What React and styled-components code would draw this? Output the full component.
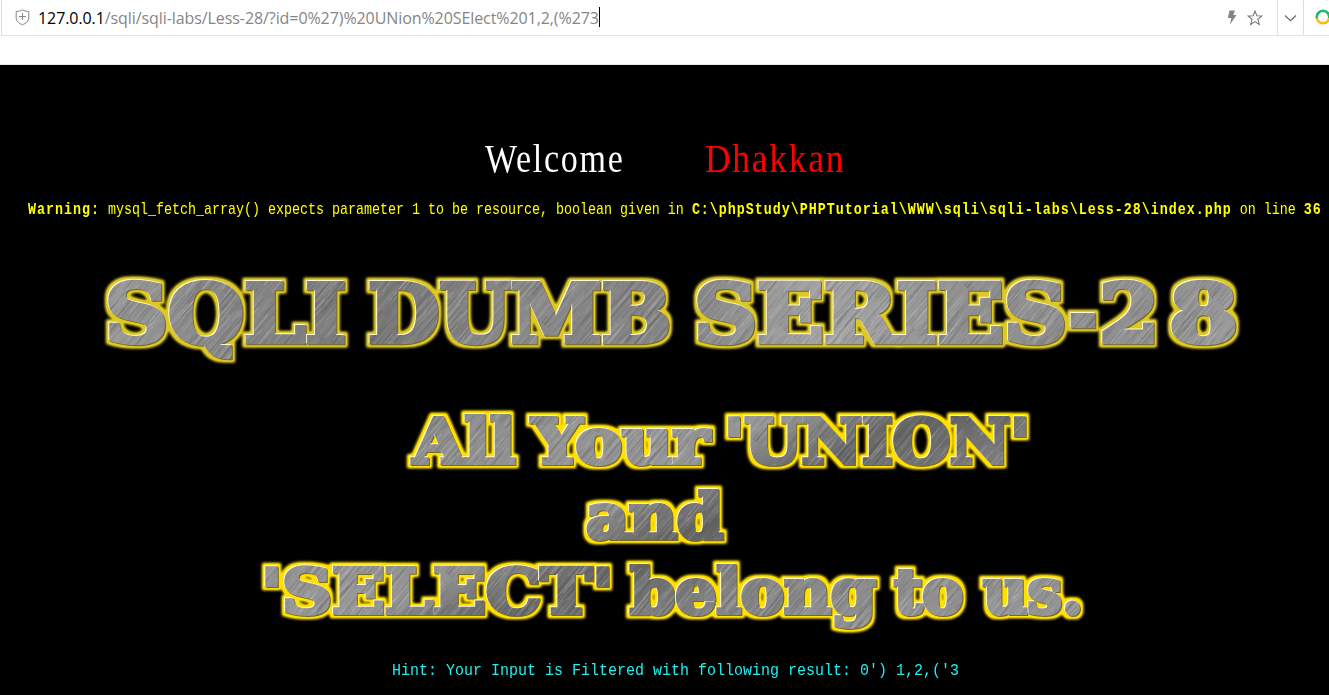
import React from "react";
import styled, { createGlobalStyle } from "styled-components";

const Global = createGlobalStyle`
  * { box-sizing: border-box; }
  html, body { margin: 0; background: #000; }
  body { width: 1329px; height: 695px; overflow: hidden; }
`;

const Page = styled.div`
  width: 1329px;
  height: 695px;
  display: flex;
  flex-direction: column;
  overflow: hidden;
  background: #000;
`;

const AddressBar = styled.header`
  height: 36px;
  flex: none;
  display: flex;
  align-items: stretch;
  margin-left: 1px;
  border-left: 1px solid #dedede;
  border-bottom: 1px solid #e2e2e2;
  background: #fff;
`;

const Chrome = styled.div`
  height: 65px;
  flex: none;
  background: #fff;
  border-bottom: 1px solid #e8e8e8;
`;

const Field = styled.div`
  flex: 1;
  display: flex;
  align-items: center;
  padding-left: 13px;
`;

const Url = styled.div`
  font: 16px/34px "Open Sans", "Noto Sans", sans-serif;
  letter-spacing: ${(p) => p.$spacing};
  color: #858585;
  margin-left: 8px;
  white-space: nowrap;
`;

const Host = styled.span`
  color: #000;
`;

const Caret = styled.span`
  width: 1px;
  height: 20px;
  background: #000;
  margin-top: -1px;
`;

const Actions = styled.div`
  display: flex;
  align-items: center;
  gap: 10px;
  padding-right: 14px;
`;

const BarCell = styled.div`
  width: ${(p) => p.$width}px;
  display: flex;
  align-items: center;
  justify-content: ${(p) => (p.$start ? "flex-start" : "center")};
  padding-left: ${(p) => (p.$start ? 11 : 0)}px;
  padding-bottom: ${(p) => (p.$start ? 2 : 0)}px;
  border-left: 1px solid #dedede;
  overflow: hidden;
`;

const Icon = styled.svg`
  display: block;
  flex: none;
  fill: none;
`;

const Content = styled.main`
  flex: 1;
  display: flex;
  flex-direction: column;
`;

const Welcome = styled.h1`
  margin: 69px 0 0 485px;
  height: 50px;
  display: flex;
  font: 400 40px/50px "Liberation Serif", serif;
`;

const Name = styled.span`
  width: ${(p) => p.$width}px;
  color: ${(p) => p.$color};
  letter-spacing: 2px;
  transform: scaleX(${(p) => p.$squeeze});
  transform-origin: left;
`;

const Warning = styled.p`
  margin: 16px 0 0 28px;
  height: 20px;
  font: 13.333px/20px "Liberation Mono", monospace;
  color: #ff0;
  white-space: pre;
  transform: scaleY(1.18);
`;

const Strong = styled.b`
  letter-spacing: 1px;
`;

const Banner = styled.svg`
  display: block;
  flex: none;
  margin-top: ${(p) => p.$top}px;
`;

const Letters = styled.text`
  font-family: "DejaVu Serif", serif;
  font-weight: 700;
  font-size: ${(p) => p.$size}px;
`;

const Hint = styled.p`
  margin: 15px 0 0 392px;
  height: 24px;
  font: 15px/24px "Liberation Mono", monospace;
  color: #2ee;
  white-space: pre;
  transform: scaleY(1.14);
`;

const titleWords = [
  ["SQLI", 105, 346, 81.5],
  ["DUMB", 368, 671, 81.5],
  ["SERIES", 694, 1067, 81.5],
  ["-", 1069, 1097, 81.5],
  ["2", 1099, 1159, 81.5],
  ["8", 1169, 1238, 81.5],
];

const sloganWords = [
  ["All", 413, 515, 67.5],
  ["Your", 532, 709, 67.5],
  ["'UNION'", 724, 1030, 67.5],
  ["and", 586, 723, 143],
  ["'SELECT'", 261, 613, 218],
  ["belong", 630, 876, 218],
  ["to", 894, 963, 218],
  ["us.", 983, 1083, 218],
];

function makeStreaks(count) {
  let seed = 4711;
  const next = () => {
    seed = (seed * 16807) % 2147483647;
    return seed / 2147483647;
  };
  return Array.from({ length: count }, () => ({
    x: next() * 150,
    y: next() * 150,
    len: 14 + next() * 40,
    light: next() > 0.5,
    opacity: 0.06 + next() * 0.24,
  }));
}

const streaks = makeStreaks(800);

function MetalSign({ id, top, height, size, words, glow, tones, axis, thick }) {
  return (
    <Banner $top={top} width="1329" height={height} viewBox={`0 0 1329 ${height}`}>
      <defs>
        <linearGradient id={`${id}-tone`} gradientUnits="userSpaceOnUse" x1={axis[0]} y1={axis[1]} x2={axis[2]} y2={axis[3]}>
          {tones.map((c, i) => (
            <stop key={i} offset={i / (tones.length - 1)} stopColor={c} />
          ))}
        </linearGradient>
        <pattern id={`${id}-streaks`} patternUnits="userSpaceOnUse" width="150" height="150" patternTransform="rotate(40)">
          {streaks.map((s, i) => (
            <rect
              key={i}
              x={s.x}
              y={s.y}
              width="0.7"
              height={s.len}
              fill={s.light ? "#dcdcdc" : "#3c3c3c"}
              opacity={s.opacity}
            />
          ))}
        </pattern>
        <pattern id={`${id}-metal`} patternUnits="userSpaceOnUse" width="1329" height={height}>
          <rect width="1329" height={height} fill={`url(#${id}-tone)`} />
          <rect width="1329" height={height} fill={`url(#${id}-streaks)`} />
        </pattern>
        <filter id={`${id}-fx`} filterUnits="userSpaceOnUse" x="0" y="-10" width="1329" height={height + 20} colorInterpolationFilters="sRGB">
          <feMorphology in="SourceAlpha" operator="dilate" radius="3" result="wide" />
          <feGaussianBlur in="wide" stdDeviation="1.8" result="soft" />
          <feComponentTransfer in="soft" result="dense">
            <feFuncA type="linear" slope="1.4" />
          </feComponentTransfer>
          <feFlood floodColor={glow} />
          <feComposite in2="dense" operator="in" result="halo" />
          <feOffset in="SourceAlpha" dx="-0.8" dy="-0.8" result="up" />
          <feFlood floodColor="#fffbd8" />
          <feComposite in2="up" operator="in" result="light" />
          <feOffset in="SourceAlpha" dx="0.7" dy="0.7" result="down" />
          <feFlood floodColor="#766a20" />
          <feComposite in2="down" operator="in" result="shade" />
          <feMerge>
            <feMergeNode in="halo" />
            <feMergeNode in="shade" />
            <feMergeNode in="light" />
            <feMergeNode in="SourceGraphic" />
          </feMerge>
        </filter>
      </defs>
      <g filter={`url(#${id}-fx)`} fill={`url(#${id}-metal)`} stroke={`url(#${id}-metal)`} strokeWidth={thick}>
        {words.map(([text, from, to, y]) => (
          <Letters
            key={text}
            $size={size}
            x={from}
            y={y}
            textLength={to - from}
            lengthAdjust="spacingAndGlyphs"
          >
            {text}
          </Letters>
        ))}
      </g>
    </Banner>
  );
}

export default function App() {
  return (
    <Page>
      <Global />
      <Chrome>
        <AddressBar>
          <Field>
            <Icon width="15" height="17" viewBox="0 0 15 17" stroke="#858585">
              <path d="M7.500 .8C5.800 2 3.500 2.400 1.200 2.400V9c0 3.200 2.700 5.300 6.300 6.800C11.100 14.300 13.800 12.200 13.800 9V2.400C11.500 2.400 9.200 2 7.500 .8Z" />
              <path d="M4 7.500h7M7.500 4v7" />
            </Icon>
            <Url $spacing="-0.08px">
              <Host>127.0.0.1</Host>/sqli/sqli-labs/Less-28/?id=0%27)%20UNion%20SElect%201,2,(%273
            </Url>
            <Caret />
          </Field>
          <Actions>
            <Icon width="10" height="15" viewBox="0 0 10 15">
              <path d="M2.500 .5H8L6.300 5H9.500L3 14.500L4.300 8H.8Z" fill="#858585" />
            </Icon>
            <Icon width="16" height="16" viewBox="0 0 15 15" stroke="#777">
              <path d="M7.500 .9L9.200 5.400L14 5.600L10.200 8.700L11.500 13.500L7.500 10.800L3.500 13.500L4.800 8.700L1 5.600L5.800 5.400Z" />
            </Icon>
          </Actions>
          <BarCell $width={26}>
            <Icon width="13" height="8" viewBox="0 0 13 8" stroke="#666" strokeWidth="1.200">
              <path d="M1 1.500L6.500 6.700L12 1.500" />
            </Icon>
          </BarCell>
          <BarCell $width={26} $start>
            <Icon width="16" height="16" viewBox="0 0 16 16" strokeWidth="2.600">
              <path d="M2 9.500A6.200 6.200 0 1 1 14 9.500" stroke="#20b865" />
              <path d="M2 9.500A6.200 6.200 0 0 0 14 9.500" stroke="#fbb817" />
            </Icon>
          </BarCell>
        </AddressBar>
      </Chrome>
      <Content>
        <Welcome>
          <Name $color="#fff" $width={220} $squeeze={0.85}>Welcome</Name>
          <Name $color="#f00" $width={160} $squeeze={0.885}>Dhakkan</Name>
        </Welcome>
        <Warning>
          <Strong>Warning:</Strong> mysql_fetch_array() expects parameter 1 to be resource, boolean given in{" "}
          <Strong>C:\phpStudy\PHPTutorial\WWW\sqli\sqli-labs\Less-28\index.php</Strong> on line <Strong>36</Strong>
        </Warning>
        <MetalSign
          id="title"
          top={40}
          height={115}
          size={79.5}
          thick={4.5}
          words={titleWords}
          glow="#ddc824"
          axis={[100, 0, 1240, 60]}
          tones={["#989898", "#858585", "#777", "#8a8a8a", "#808080", "#a4a4a4", "#929292", "#8c8c8c", "#999"]}
        />
        <MetalSign
          id="slogan"
          top={20}
          height={250}
          size={62}
          thick={4}
          words={sloganWords}
          glow="#ffe000"
          axis={[95, 202, 256, 549]}
          tones={["#8c8c8c", "#949494", "#949494", "#606060", "#808080", "#8c8c8c", "#949494"]}
        />
        <Hint>Hint: Your Input is Filtered with following result: 0') 1,2,('3</Hint>
      </Content>
    </Page>
  );
}
